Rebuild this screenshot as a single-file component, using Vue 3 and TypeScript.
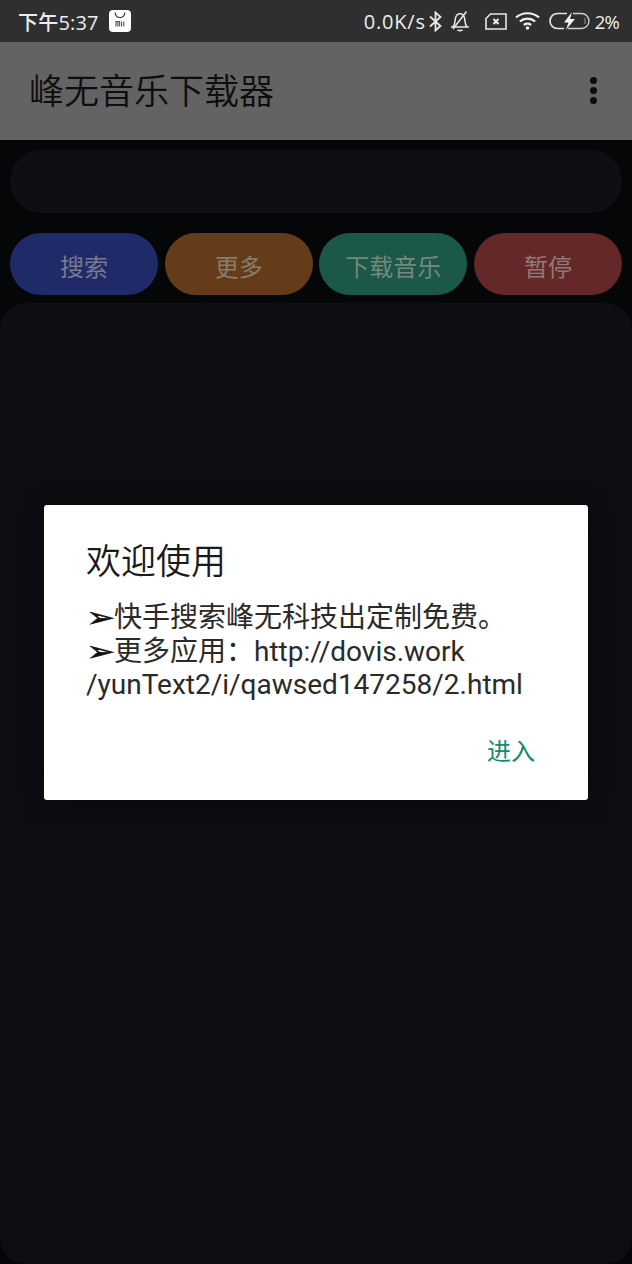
<script setup lang="ts">
interface Action { label: string; tone: string }
const actions: Action[] = [
  { label: '搜索', tone: 'blue' },
  { label: '更多', tone: 'orange' },
  { label: '下载音乐', tone: 'green' },
  { label: '暂停', tone: 'red' },
]
</script>

<template>
  <div class="screen">
    <header class="status">
      <div class="status-left">
        <span class="time">下午5:37</span>
        <span class="mi-badge">
          <svg width="22" height="22" viewBox="0 0 22 22">
            <path d="M6 2.500c.6 3.600 2.600 5 5 5s4.400-1.400 5-5" fill="none" stroke="#333" stroke-width="1.200" />
            <path d="M7 16.500v-5h3.600v5M8.800 12v4.500M12.600 11.500v5M14.800 11.500v5" fill="none" stroke="#555" stroke-width="1.100" />
          </svg>
        </span>
      </div>
      <div class="status-right">
        <span class="speed">0.0K/s</span>
        <svg width="13" height="21" viewBox="0 0 13 21" class="ic-bt">
          <path d="M1 5.500l10.500 9.500-5 4.500V1.500l5 4.500L1 15.500" fill="none" stroke="#e8e8e8" stroke-width="1.800" />
        </svg>
        <svg width="20" height="22" viewBox="0 0 20 22" class="ic-bell">
          <path d="M1 17h18M3 17c2.300-2.500 1.800-6 2.500-9 .7-2.800 2.500-4.200 4.500-4.200s3.800 1.400 4.500 4.200c.7 3 .2 6.500 2.500 9" fill="none" stroke="#e8e8e8" stroke-width="1.500" />
          <path d="M16.500 1.500L3 19" fill="none" stroke="#e8e8e8" stroke-width="1.500" />
          <path d="M7.500 19.800c1.500 1 3.500 1 5 0" fill="none" stroke="#e8e8e8" stroke-width="1.500" />
        </svg>
        <svg width="22" height="17" viewBox="0 0 22 17" class="ic-sim">
          <path d="M5.500 1H21V16H1V5.500Z" fill="none" stroke="#e8e8e8" stroke-width="1.600" />
          <path d="M8.500 6l5 5M13.500 6l-5 5" fill="none" stroke="#f0f0f0" stroke-width="1.900" />
        </svg>
        <svg width="25" height="18" viewBox="0 0 25 18" class="ic-wifi">
          <path d="M1 5.500C7.500-.2 17.500-.2 24 5.500" fill="none" stroke="#f0f0f0" stroke-width="2.200" />
          <path d="M4.800 9.500c4.400-3.800 11-3.800 15.400 0" fill="none" stroke="#f0f0f0" stroke-width="2.200" />
          <path d="M8.800 13c2.200-1.500 5.200-1.500 7.400 0" fill="none" stroke="#f0f0f0" stroke-width="2.200" />
          <circle cx="12.500" cy="16" r="1.800" fill="#f0f0f0" />
        </svg>
        <svg width="41" height="18" viewBox="0 0 41 18" class="ic-batt">
          <path d="M18 1.500H8.500a7.500 7.500 0 0 0 0 15H15" fill="none" stroke="#e4e4e4" stroke-width="1.700" />
          <path d="M24 1.500H32.500a7.500 7.500 0 0 1 0 15H19" fill="none" stroke="#cfcfcf" stroke-width="1.400" />
          <path d="M23 0l-8 10.500h4.600L16.800 18l9.200-11h-5z" fill="#f6f6f6" />
          <path d="M36 6v6" stroke="#777" stroke-width="1.500" />
        </svg>
        <span class="pct">2%</span>
      </div>
    </header>

    <div class="appbar">
      <h1 class="app-title">峰无音乐下载器</h1>
      <div class="kebab"><i></i><i></i><i></i></div>
    </div>

    <main class="body">
      <div class="search"></div>
      <div class="actions">
        <button v-for="a in actions" :key="a.label" class="pill" :class="a.tone">{{ a.label }}</button>
      </div>
      <section class="panel"></section>
    </main>

    <div class="dialog" role="dialog">
      <h2 class="dialog-title">欢迎使用</h2>
      <p class="dialog-text"><span class="arrow">➢</span>快手搜索峰无科技出定制免费。<br /><span class="arrow">➢</span>更多应用：http://dovis.work<br />/yunText2/i/qawsed147258/2.html</p>
      <div class="dialog-actions"><span class="enter">进入</span></div>
    </div>
  </div>
</template>

<style>
html, body { margin: 0; background: #050608; }
</style>

<style scoped>
.screen {
  position: relative;
  width: 632px;
  height: 1264px;
  overflow: hidden;
  display: flex;
  flex-direction: column;
  background: #050608;
  font-family: Roboto, "Noto Sans CJK SC", sans-serif;
}
.status {
  height: 42px;
  flex: none;
  background: #2f2f2f;
  display: flex;
  align-items: center;
  justify-content: space-between;
  padding: 0 13px 0 18px;
  color: #ededed;
}
.status-left { display: flex; align-items: center; gap: 10px; }
.time { font-size: 20px; font-weight: 500; letter-spacing: .2px; font-family: "Open Sans", "Noto Sans CJK SC", sans-serif; }
.mi-badge {
  width: 22px;
  height: 22px;
  background: #fff;
  border-radius: 4px;
  display: block;
}
.mi-badge svg { display: block; }
.status-right { display: flex; align-items: center; }
.speed { font-size: 20px; font-weight: 500; font-family: "Open Sans", sans-serif; letter-spacing: .8px; }
.ic-bt { margin-left: 3px; }
.ic-bell { margin-left: 8px; }
.ic-sim { margin-left: 15px; }
.ic-wifi { margin-left: 8px; }
.ic-batt { margin-left: 9px; }
.pct { font-size: 18.500px; font-weight: 500; letter-spacing: -.8px; font-family: "Open Sans", sans-serif; margin-left: 5px; }
.appbar {
  height: 98px;
  flex: none;
  background: #636363;
  display: flex;
  align-items: center;
  justify-content: space-between;
  padding: 0 35px 0 29px;
}
.app-title { margin: 2px 0 0; font-size: 35px; font-weight: 350; color: #0e0e0e; line-height: 1; }
.kebab { display: flex; flex-direction: column; gap: 3px; margin-bottom: 2px; }
.kebab i { width: 7px; height: 7px; border-radius: 50%; background: #0c0c0c; display: block; }
.body {
  flex: 1;
  display: flex;
  flex-direction: column;
  padding-top: 10px;
}
.search {
  height: 63px;
  margin: 0 10px;
  border-radius: 32px;
  background: #0d0f12;
}
.actions {
  display: grid;
  grid-template-columns: repeat(4, 148px);
  justify-content: space-between;
  margin: 20px 10px 0;
}
.pill {
  height: 62px;
  border: 0;
  padding: 2px 0 0;
  border-radius: 31px;
  font: inherit;
  font-size: 24px;
  color: #7f8084;
}
.blue { background: #1f2b69; color: #77798f; }
.orange { background: #643c19; color: #8a7c6c; }
.green { background: #1b5847; color: #76877f; }
.red { background: #652828; color: #8e7a7a; }
.panel {
  flex: 1;
  margin-top: 8px;
  background: #0c0e12;
  border-radius: 26px;
}
.dialog {
  position: absolute;
  left: 44px;
  top: 505px;
  width: 544px;
  height: 295px;
  box-sizing: border-box;
  padding: 36px 42px 0;
  background: #fff;
  border-radius: 3px;
  box-shadow: 0 0 24px rgba(0, 0, 0, .45);
  display: flex;
  flex-direction: column;
}
.dialog-title { margin: 0; font-size: 35px; font-weight: 350; line-height: 44px; color: #1a1a1a; }
.dialog-text { margin: 16px 0 0; font-size: 28px; line-height: 33.500px; color: #2a2a2a; white-space: nowrap; }
.arrow {
  display: inline-block;
  width: 28px;
  font-family: "DejaVu Sans", sans-serif;
  font-size: 28px;
  line-height: 0;
  color: #111;
  -webkit-text-stroke: .4px #111;
  transform: scaleX(1.25);
  transform-origin: left center;
}
.dialog-actions { margin-top: 34px; display: flex; justify-content: flex-end; padding-right: 11px; }
.enter { font-size: 24px; line-height: 32px; color: #138a72; }
</style>
